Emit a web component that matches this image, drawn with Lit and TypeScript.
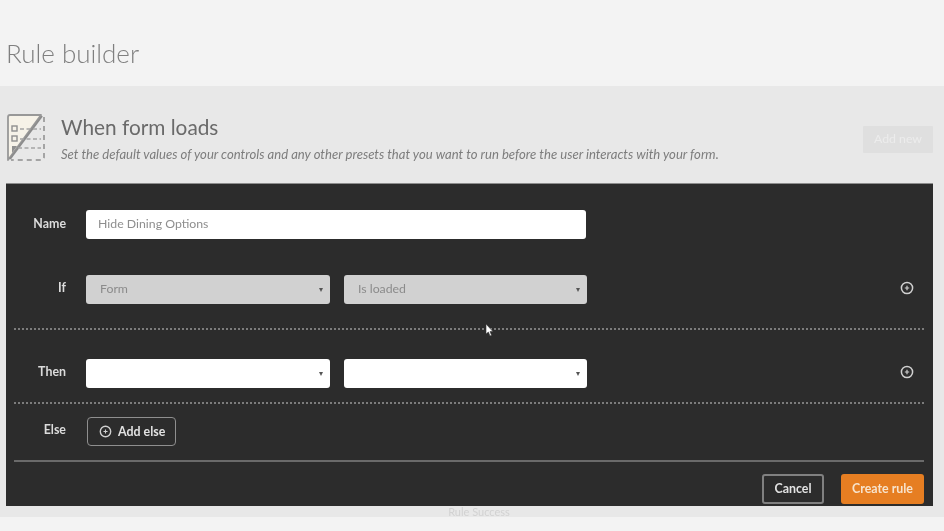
import { LitElement, html, css, svg } from "lit";
import { customElement } from "lit/decorators.js";

const plus = (size: number) => html`<svg class="plus" width=${size} height=${size} viewBox="0 0 14 14" fill="none" stroke="currentColor"><circle cx="7" cy="7" r="5.6" stroke-width="1.5"/><path d="M7 4.8v4.4M4.8 7h4.4" stroke-width="1.2"/></svg>`;

const ruleIcon = svg`<svg class="ruleicon" width="40" height="52" viewBox="0 0 40 52" fill="none">
  <path d="M3 47 V4 Q3 2 5 2 H36 L3 47Z" fill="#f6f2e8" stroke="#989898" stroke-width="1.8" stroke-linejoin="round"/>
  <path d="M37 3 L5 46" stroke="#8c8c8c" stroke-width="2"/>
  <path d="M39 4 V44 Q39 47 36 47 H6" stroke="#a4a4a4" stroke-width="2" stroke-dasharray="5 4"/>
  <rect x="7" y="13" width="5" height="5" stroke="#8f8f8f" stroke-width="1.4"/>
  <rect x="7" y="23" width="5" height="5" stroke="#8f8f8f" stroke-width="1.4"/>
  <path d="M15 16 H36 M15 26 H36 M13 35 H36" stroke="#a4a4a4" stroke-width="1.5" stroke-dasharray="4 2.5"/>
  <path d="M7 33 L12 33 L7 40Z" fill="#8f8f8f"/>
</svg>`;

@customElement("app-root")
export class AppRoot extends LitElement {
  static styles = css`
    :host { display: block; width: 944px; height: 531px; overflow: hidden; position: relative; background: #f3f3f3; font-family: Lato, "Liberation Sans", sans-serif; filter: blur(0.5px); }
    .top { height: 86px; box-sizing: border-box; padding: 37px 0 0 6px; }
    h1 { margin: 0; font-size: 26px; line-height: 33px; font-weight: 300; color: #7f7f7f; }
    .section { background: #e8e8e8; height: 431px; padding-left: 6px; box-sizing: border-box; overflow: hidden; }
    .head { height: 97px; display: flex; box-sizing: border-box; padding: 27px 11px 0 0; }
    .ruleicon { flex: none; margin: 0 16px 0 -1px; }
    .headtext { flex: 1; }
    h2 { margin: -1px 0 0; font-size: 20.8px; line-height: 30px; font-weight: 400; color: #6a6a6a; }
    .sub { margin: 4px 0 0; font-size: 13.1px; line-height: 16px; font-style: italic; color: #7d7d7d; white-space: nowrap; }
    .addnew { flex: none; width: 70px; height: 27px; margin-top: 13px; background: #dfdfdf; color: #ececec; font-size: 12.3px; line-height: 25px; text-align: center; border-radius: 1px; }
    .panel { width: 927px; height: 323px; box-sizing: border-box; background: #2c2c2c; padding: 26px 9px 0 8px; border-top: 1px solid #8d8d8d; color: #e6e6e6; }
    .row { display: flex; align-items: flex-start; }
    .label { width: 52px; margin-right: 20px; flex: none; text-align: right; font-size: 12.4px; line-height: 27px; font-weight: 700; color: #dcdcdc; }
    .if .label, .then .label, .else .label { line-height: 25px; }
    .input, .select { box-sizing: border-box; height: 29px; border-radius: 3px; background: #fff; font-size: 12.3px; line-height: 28px; color: #8e8e8e; padding-left: 12px; }
    .input { width: 500px; }
    .select { width: 243px; margin-right: 14px; position: relative; padding-left: 14px; }
    .select.first { width: 244px; }
    .select::after { content: ""; position: absolute; right: 7px; top: 13px; border: 2.5px solid transparent; border-top: 4px solid #555; border-bottom: 0; }
    .select.off { background: #d1d1d1; color: #8b8b8b; }
    .plus { color: #d0d0d0; flex: none; display: block; }
    .addplus { margin: 6px 10px 0 auto; }
    .if { margin-top: 36px; }
    .dash { border-top: 2px dotted #7c7c7c; height: 0; }
    .d1 { margin-top: 24px; }
    .then { margin-top: 29px; }
    .d2 { margin-top: 14px; }
    .else { margin-top: 13px; }
    .addelse { margin-left: 1px; box-sizing: border-box; width: 89px; height: 29px; border: 1.5px solid #8f8f8f; border-radius: 4px; display: flex; align-items: center; padding-left: 11px; gap: 6px; font-size: 12.4px; font-weight: 700; color: #e2e2e2; }
    .solid { margin-top: 14px; border-top: 2px solid #6a6a6a; }
    .foot { display: flex; justify-content: flex-end; margin-top: 12px; gap: 17px; }
    .btn { box-sizing: border-box; height: 30px; border-radius: 3px; font-size: 12.4px; font-weight: 700; line-height: 26px; text-align: center; }
    .cancel { width: 62px; border: 2px solid #808080; color: #e2e2e2; }
    .create { width: 83px; background: #e67e22; color: #f7e3cc; line-height: 29px; }
    .below { text-align: center; font-size: 11px; line-height: 11px; padding-left: 8px; color: #d2d2d2; }
    .cursor { position: absolute; left: 485px; top: 323px; }
  `;

  render() {
    return html`
      <div class="top"><h1>Rule builder</h1></div>
      <div class="section">
        <div class="head">
          ${ruleIcon}
          <div class="headtext">
            <h2>When form loads</h2>
            <p class="sub">Set the default values of your controls and any other presets that you want to run before the user interacts with your form.</p>
          </div>
          <div class="addnew">Add new</div>
        </div>
        <div class="panel">
          <div class="row"><div class="label">Name</div><div class="input">Hide Dining Options</div></div>
          <div class="row if">
            <div class="label">If</div>
            <div class="select first off">Form</div>
            <div class="select off">Is loaded</div>
            <span class="addplus">${plus(14)}</span>
          </div>
          <div class="dash d1"></div>
          <div class="row then">
            <div class="label">Then</div>
            <div class="select first"></div>
            <div class="select"></div>
            <span class="addplus">${plus(14)}</span>
          </div>
          <div class="dash d2"></div>
          <div class="row else">
            <div class="label">Else</div>
            <div class="addelse">${plus(13)}Add else</div>
          </div>
          <div class="solid"></div>
          <div class="foot">
            <div class="btn cancel">Cancel</div>
            <div class="btn create">Create rule</div>
          </div>
        </div>
        <div class="below">Rule Success</div>
      </div>
      <svg class="cursor" width="9" height="14" viewBox="0 0 9 14"><path d="M1 1 V11 L3.4 9 L5 13 L6.6 12.3 L5 8.6 H8Z" fill="#fff" stroke="#333" stroke-width=".6"/></svg>
    `;
  }
}
